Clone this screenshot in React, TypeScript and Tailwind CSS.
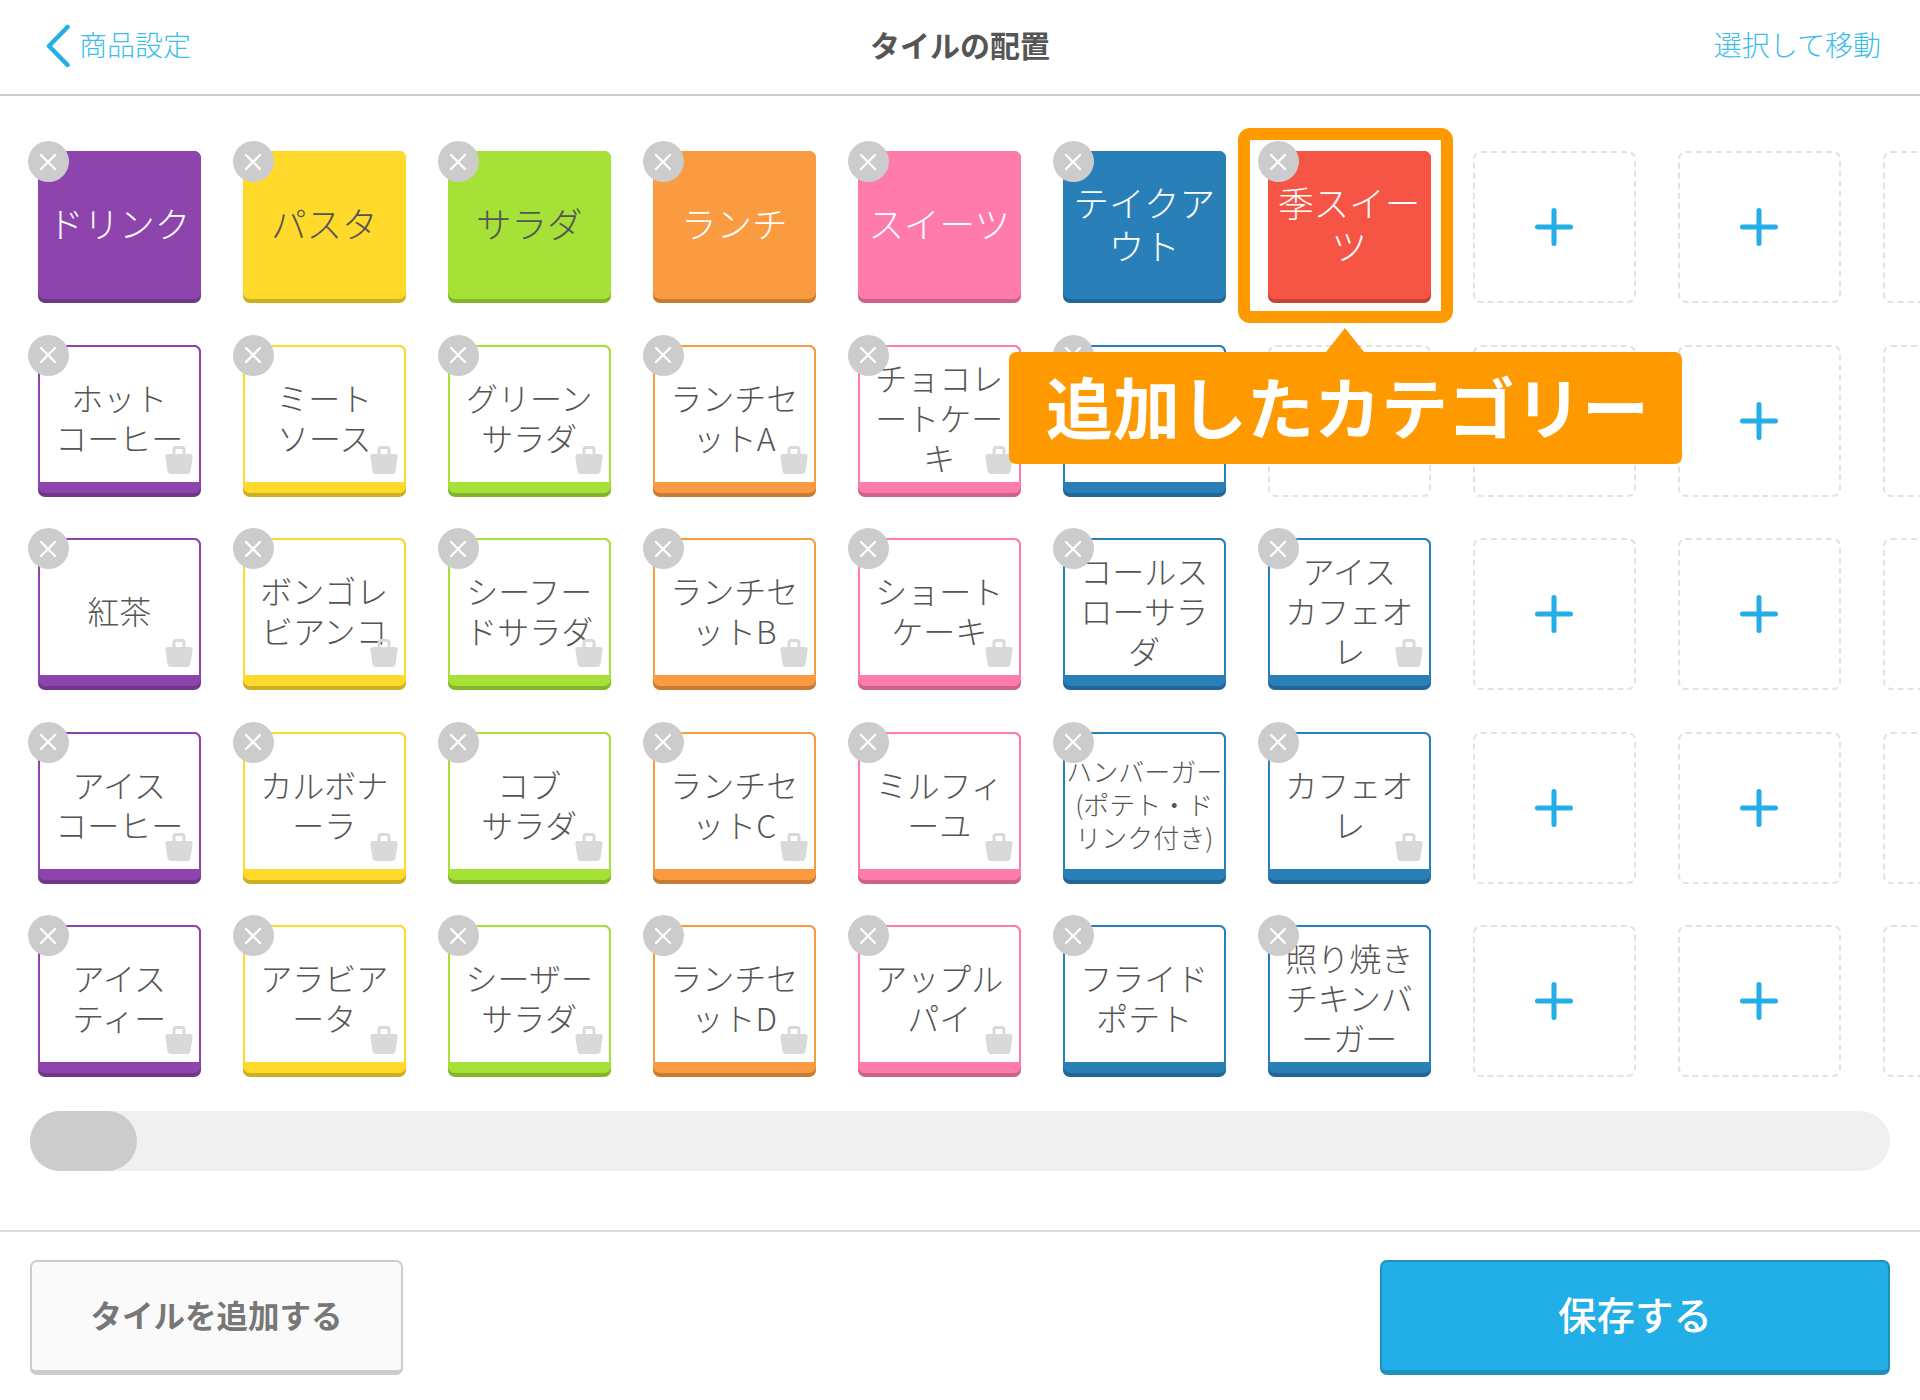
import { Fragment } from 'react'
import { X } from 'lucide-react'

type Color = { edge: string; dark: string; text: string }

const COLORS: Color[] = [
  { edge: 'bg-[#8e44ad] border-[#8e44ad]', dark: 'bg-[#703688]', text: 'text-white' },
  { edge: 'bg-[#ffda2a] border-[#ffda2a]', dark: 'bg-[#cdaf22]', text: 'text-[#555]' },
  { edge: 'bg-[#a5e137] border-[#a5e137]', dark: 'bg-[#84b42c]', text: 'text-[#555]' },
  { edge: 'bg-[#fa9a41] border-[#fa9a41]', dark: 'bg-[#c87b34]', text: 'text-white' },
  { edge: 'bg-[#ff7bac] border-[#ff7bac]', dark: 'bg-[#cc628a]', text: 'text-white' },
  { edge: 'bg-[#2980b9] border-[#2980b9]', dark: 'bg-[#216694]', text: 'text-white' },
  { edge: 'bg-[#f65545] border-[#f65545]', dark: 'bg-[#c54437]', text: 'text-white' },
]

const CATEGORIES = [['ドリンク'], ['パスタ'], ['サラダ'], ['ランチ'], ['スイーツ'], ['テイクア', 'ウト'], ['季スイー', 'ツ']]

// item rows, by column. null = empty slot
type Item = { lines: string[]; bag?: boolean; small?: boolean }
const it = (...lines: string[]): Item => ({ lines, bag: true })
const nb = (...lines: string[]): Item => ({ lines })

const ITEMS: (Item | null)[][] = [
  [it('ホット', 'コーヒー'), it('ミート', 'ソース'), it('グリーン', 'サラダ'), it('ランチセ', 'ットA'), it('チョコレ', 'ートケー', 'キ'), nb(), null],
  [it('紅茶'), it('ボンゴレ', 'ビアンコ'), it('シーフー', 'ドサラダ'), it('ランチセ', 'ットB'), it('ショート', 'ケーキ'), nb('コールス', 'ローサラ', 'ダ'), it('アイス', 'カフェオ', 'レ')],
  [it('アイス', 'コーヒー'), it('カルボナ', 'ーラ'), it('コブ', 'サラダ'), it('ランチセ', 'ットC'), it('ミルフィ', 'ーユ'), { lines: ['ハンバーガー', '(ポテト・ド', 'リンク付き)'], small: true }, it('カフェオ', 'レ')],
  [it('アイス', 'ティー'), it('アラビア', 'ータ'), it('シーザー', 'サラダ'), it('ランチセ', 'ットD'), it('アップル', 'パイ'), nb('フライド', 'ポテト'), nb('照り焼き', 'チキンバ', 'ーガー')],
]

function Label({ lines }: { lines: string[] }) {
  return (
    <div className="whitespace-nowrap text-center">
      {lines.map((l, i) => (
        <Fragment key={l}>
          {i > 0 && <br />}
          {l}
        </Fragment>
      ))}
    </div>
  )
}

function DeleteBadge() {
  return (
    <div className="absolute -left-[10px] -top-[10px] z-10 flex h-[41px] w-[41px] items-center justify-center rounded-full bg-[#cccccc]">
      <X size={28} strokeWidth={2} className="text-white" />
    </div>
  )
}

function Bag() {
  return (
    <svg viewBox="0 0 28 28" className="absolute bottom-[23px] right-[8px] h-[28px] w-[28px]">
      <path d="M9 9V3.5Q9 1.5 11 1.5H17Q19 1.5 19 3.5V9" fill="none" stroke="#d9d9d9" strokeWidth="3" />
      <path d="M3 8H25Q28 8 27.6 11L25.5 25Q25 28 22 28H6Q3 28 2.5 25L.4 11Q0 8 3 8Z" fill="#d9d9d9" />
    </svg>
  )
}

function CategoryTile({ lines, color }: { lines: string[]; color: Color }) {
  return (
    <div className={`relative h-[152px] w-[163.5px] rounded-[7px] pb-[4px] ${color.dark}`}>
      <DeleteBadge />
      <div className={`flex h-full items-center justify-center rounded-[7px] pb-[5px] text-[35.5px] leading-[43px] font-light ${color.edge} ${color.text}`}>
        <Label lines={lines} />
      </div>
    </div>
  )
}

function ItemTile({ item, color }: { item: Item; color: Color }) {
  return (
    <div className={`relative h-[152px] w-[163.5px] rounded-[7px] pb-[4px] ${color.dark}`}>
      <DeleteBadge />
      <div className={`flex h-full flex-col rounded-[7px] border-2 border-b-0 ${color.edge}`}>
        <div
          className={`flex flex-1 items-center justify-center rounded-t-[5px] bg-white pt-[5px] font-light text-[#555] ${
            item.small ? 'text-[26px] leading-[33px]' : 'text-[32px] leading-[40px]'
          }`}
        >
          <Label lines={item.lines} />
        </div>
        <div className="h-[11px] shrink-0" />
      </div>
      {item.bag && <Bag />}
    </div>
  )
}

function EmptySlot({ plus = true }: { plus?: boolean }) {
  return (
    <div className="flex h-[152px] w-[163.5px] items-center justify-center rounded-[8px] border-2 border-dashed border-[#e2e2e2]">
      {plus && (
        <svg viewBox="0 0 38 38" className="h-[38px] w-[38px]">
          <path d="M19 2.5V35.5M2.5 19H35.5" stroke="#22aee6" strokeWidth="5" strokeLinecap="round" fill="none" />
        </svg>
      )}
    </div>
  )
}

export default function App() {
  return (
    <div className="relative flex h-[1400px] w-[1920px] flex-col overflow-hidden bg-white font-['Noto_Sans_CJK_JP','Noto_Sans',sans-serif]">
      {/* header */}
      <header className="flex h-[96px] shrink-0 items-center justify-between border-b-2 border-[#cccccc] pb-[6px] pl-[45px] pr-[39px]">
        <div className="flex w-[297px] items-center gap-[8px]">
          <svg viewBox="0 0 26 44" className="mt-[3px] h-[44px] w-[26px]">
            <path d="M22.5 3 L4 22 L22.5 41" stroke="#22aee6" strokeWidth="4.5" strokeLinecap="round" strokeLinejoin="round" fill="none" />
          </svg>
          <span className="text-[28px] font-light text-[#3dbdec]">商品設定</span>
        </div>
        <h1 className="text-[30px] font-bold text-[#555]">タイルの配置</h1>
        <div className="w-[303px] text-right text-[28px] font-light text-[#3dbdec]">選択して移動</div>
      </header>

      {/* tile grid */}
      <div className="flex flex-col gap-y-[41.5px] pl-[37.5px] pt-[55px]">
        <div className="flex gap-x-[41.5px]">
          {CATEGORIES.map((lines, i) => (
            <div key={i} className="shrink-0">
              <CategoryTile lines={lines} color={COLORS[i]} />
            </div>
          ))}
          <div className="shrink-0"><EmptySlot /></div>
          <div className="shrink-0"><EmptySlot /></div>
          <div className="shrink-0"><EmptySlot plus={false} /></div>
        </div>
        {ITEMS.map((row, r) => (
          <div key={r} className="flex gap-x-[41.5px]">
            {row.map((item, i) => (
              <div key={i} className="shrink-0">
                {item ? <ItemTile item={item} color={COLORS[i === 6 ? 5 : i]} /> : <EmptySlot />}
              </div>
            ))}
            <div className="shrink-0"><EmptySlot /></div>
            <div className="shrink-0"><EmptySlot /></div>
            <div className="shrink-0"><EmptySlot plus={false} /></div>
          </div>
        ))}
      </div>

      {/* scrollbar */}
      <div className="mx-[30px] mt-[34px] h-[60px] shrink-0 rounded-full bg-[#f0f0f0]">
        <div className="h-full w-[107px] rounded-full bg-[#cccccc]" />
      </div>

      {/* footer */}
      <footer className="mt-[59px] flex flex-1 items-start justify-between border-t-2 border-[#dddddd] px-[30px] pt-[28px]">
        <button type="button" className="h-[115px] w-[373px] rounded-[7px] border-2 border-b-[5px] border-[#cccccc] bg-[#fafafa] pb-[3px] text-[31.5px] font-bold text-[#777]">
          タイルを追加する
        </button>
        <button type="button" className="h-[115px] w-[510px] rounded-[7px] border-2 border-b-[5px] border-[#1f8fbd] bg-[#22aee6] pb-[4px] text-[38.5px] font-medium text-white">
          保存する
        </button>
      </footer>

      {/* highlight on the added category */}
      <div className="pointer-events-none absolute left-[1238px] top-[128px] z-20 h-[195px] w-[215px] rounded-[12px] border-[12px] border-[#ff9900]" />

      {/* callout */}
      <div className="absolute left-[1009px] top-[352px] z-20 flex h-[112px] w-[673px] items-center justify-center rounded-[7px] bg-[#ff9900] pb-[5px] pl-[4px] text-[67px] font-bold text-white">
        <div className="absolute -top-[24px] left-[317px] h-0 w-0 border-x-[19px] border-b-[24px] border-x-transparent border-b-[#ff9900]" />
        <span className="whitespace-nowrap">追加したカテゴリー</span>
      </div>
    </div>
  )
}
